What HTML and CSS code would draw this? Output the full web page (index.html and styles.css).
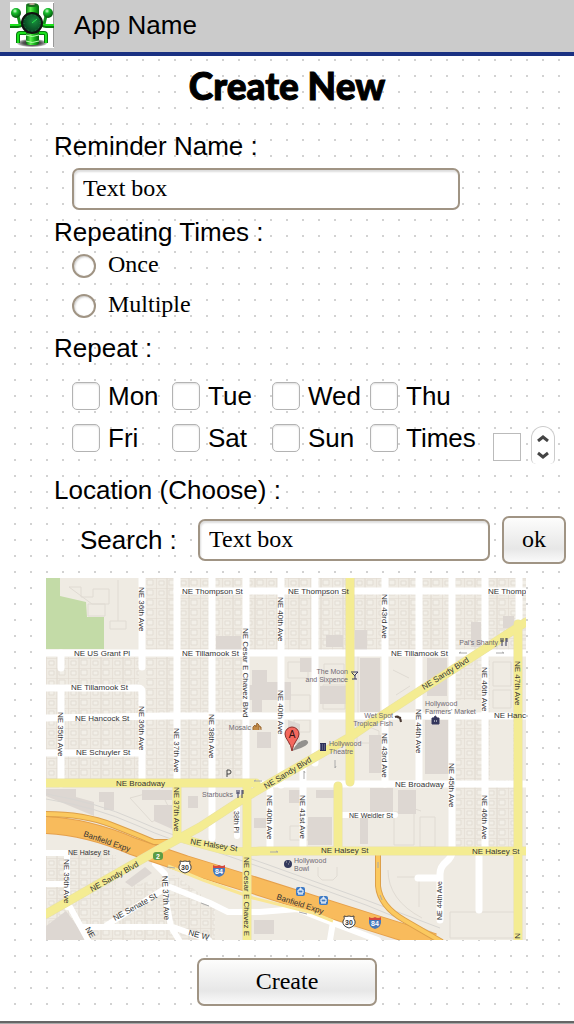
FILE: index.html
```html
<!DOCTYPE html>
<html lang="en">
<head>
<meta charset="utf-8">
<meta name="viewport" content="width=device-width, initial-scale=1">
<title>Create New</title>
<link rel="stylesheet" href="styles.css">
</head>
<body>
<header class="app-bar">
  <svg class="logo" viewBox="0 0 44 46" aria-hidden="true">
    <defs>
      <linearGradient id="tube" x1="0" x2="1" y1="0" y2="0"><stop offset="0" stop-color="#087a10"/><stop offset=".35" stop-color="#5df04e"/><stop offset=".65" stop-color="#18b41c"/><stop offset="1" stop-color="#04640a"/></linearGradient>
      <radialGradient id="ball" cx=".4" cy=".3" r=".7"><stop offset="0" stop-color="#d4ffd0"/><stop offset=".35" stop-color="#18c02c"/><stop offset="1" stop-color="#03520c"/></radialGradient>
      <radialGradient id="dial" cx=".6" cy=".4" r=".7"><stop offset="0" stop-color="#17903c"/><stop offset="1" stop-color="#04301c"/></radialGradient>
      <radialGradient id="ground"><stop offset="0" stop-color="#111"/><stop offset=".6" stop-color="#555"/><stop offset="1" stop-color="#ccc"/></radialGradient>
    </defs>
    <path fill="#fff" d="M0 0h44v46H0z"/>
    <path fill="#999" d="M43 1h1v44h-1z"/>
    <ellipse cx="22" cy="41" rx="15" ry="4" fill="url(#ground)"/>
    <path d="M0 24h8q4 0 6-5l2-5M44 24h-8q-4 0-6-5l-2-5M8 41V33q0-2 2-2h6M36 41V33q0-2-2-2h-6" fill="none" stroke="#067a0c" stroke-width="4"/>
    <path d="M0 23h8q4 0 6-5l2-5M44 23h-8q-4 0-6-5l-2-5M8 41V33q0-2 2-2h6M36 41V33q0-2-2-2h-6" fill="none" stroke="#1be01c" stroke-width="2"/>
    <path d="M8 14l2 8M36 14l-2 8" stroke="#12951a" stroke-width="3"/>
    <rect x="16" y="2" width="13" height="41" rx="3" fill="url(#tube)"/>
    <ellipse cx="22" cy="3" rx="6" ry="2" fill="#1a6c20"/>
    <ellipse cx="22" cy="2" rx="3" ry="1" fill="#c9a99e"/>
    <path d="M16 33q6 3 13 0M16 39q6 3 13 0" fill="none" stroke="#b4ffaf"/>
    <circle cx="6" cy="11" r="5" fill="url(#ball)"/>
    <circle cx="38" cy="11" r="5" fill="url(#ball)"/>
    <circle cx="22" cy="21" r="10" fill="url(#dial)" stroke="#111" stroke-width="2"/>
    <circle cx="22" cy="21" r="8" fill="none" stroke="#2c7a48" stroke-dasharray="1 3"/>
    <path d="M22 21l5-4" stroke="#2ce050"/>
  </svg>
  <span class="app-name">App Name</span>
</header>

<main class="screen">
  <h1 class="title">Create New</h1>
  <form class="form">
    <label class="heading" for="name">Reminder Name :</label>
    <input class="text-box name-box" id="name" type="text" value="Text box">

    <fieldset class="group">
      <legend class="heading">Repeating Times :</legend>
      <div class="radios">
        <label class="radio-row"><input class="radio" type="radio" name="times"><span>Once</span></label>
        <label class="radio-row"><input class="radio" type="radio" name="times"><span>Multiple</span></label>
      </div>
    </fieldset>

    <fieldset class="group repeat">
      <legend class="heading">Repeat :</legend>
      <div class="days">
        <label class="day"><input class="check" type="checkbox">Mon</label>
        <label class="day"><input class="check" type="checkbox">Tue</label>
        <label class="day"><input class="check" type="checkbox">Wed</label>
        <label class="day"><input class="check" type="checkbox">Thu</label>
        <label class="day first"><input class="check" type="checkbox">Fri</label>
        <label class="day"><input class="check" type="checkbox">Sat</label>
        <label class="day"><input class="check" type="checkbox">Sun</label>
        <label class="day"><input class="check" type="checkbox">Times</label>
        <div class="stepper">
          <input class="count" type="text" aria-label="Number of times">
          <div class="arrows">
            <button class="arrow" type="button" aria-label="More"><svg viewBox="0 0 12 8"><path d="M1 7l5-4 5 4"/></svg></button>
            <button class="arrow" type="button" aria-label="Fewer"><svg viewBox="0 0 12 8"><path d="M1 2l5 4 5-4"/></svg></button>
          </div>
        </div>
      </div>
    </fieldset>

    <h2 class="heading location">Location (Choose) :</h2>
    <div class="search">
      <label class="search-label" for="search">Search :</label>
      <input class="text-box search-box" id="search" type="text" value="Text box">
      <button class="button ok" type="button">ok</button>
    </div>

    <svg class="map" viewBox="46 578 480 362" role="img" aria-label="Street map of the Hollywood district">
      <defs>
        <pattern id="lots" x="46" y="578" width="22" height="10" patternUnits="userSpaceOnUse">
          <path d="M0 0H22M0 0V10M11 0V10" stroke="#dfd8ce" fill="none"/>
          <path d="M3 3h5v4H3zM13 2h6v5h-6z" fill="#f2efe8" stroke="#e3ddd4"/>
        </pattern>
        <g id="us30"><path d="M-5-6q2 1 5 0q3 1 5 0q-1 3 1 5q1 5-6 7q-7-2-6-7q2-2 1-5z" fill="#fff" stroke="#444"/><text class="shield" y="3">30</text></g>
        <g id="i84"><path d="M-6-3h12q1 7-6 9q-7-2-6-9z" fill="#4879bb"/><path d="M-6-6q3 2 6 0q3 2 6 0v3H-6z" fill="#d5483e"/><text class="shield light" y="3">84</text></g>
        <g id="fork" fill="none" stroke="#34365c"><path d="M-3-4v4M-1-4v4M-3-1h2M-2 0v4" /><path d="M2-4v8M3-4v4" /></g>
        <g id="transit"><rect x="-4" y="-4" width="9" height="9" rx="2" fill="#3e7ac4"/><path d="M-2 2V-1h5v3zM0-1v-2h1v2M-2 3h5" fill="none" stroke="#fff"/></g>
      </defs>

      <path fill="#efebe3" d="M46 578h480v362H46z"/>
      <path fill="url(#lots)" d="M146 578h380v75H146zM46 657h93v127H46zM146 657h100v127H146zM285 578h62v75h-62zM355 578h171v75H355zM456 660h60v190h-60zM388 578h62v75h-62zM46 855h70v85H46zM115 890l60-15 40 30v35H115z"/>

      <g fill="#efebe3">
        <path d="M60 578h79v71H60zM250 657h28v56h-28zM285 657h62v126h-62zM355 657h60v58h-60zM355 720h28v60h-28zM455 700h28v12h-28zM490 657h24v55h-24zM388 788h60v58h-60zM490 720h23v60h-23z"/>
      </g>
      <g fill="none" stroke="#e0dbd3">
        <path d="M69 587h12v10h12v-8h16v15H92zM88 604h17v12H88zM110 621h16v8h-16zM118 580v41M288 662h20v16h-20zM294 720h16v12h-16zM324 664h20v18h-20zM393 670l16 8M396 695l14-9M290 826h18v14h-18zM358 655v58M394 812h20v33h-20zM420 817h15v30h-15zM318 867v9l4 4h11l4-4v-9M405 794l10 3-6 10 12 4M388 870q0 30 34 48M397 877h22v30"/>
        <path d="M290 695h20v16h-20zM323 685h22v24h-22zM493 662h18v24h-18zM493 690h18v18h-18zM130 798l30-8 10 20-18 12zM450 912h65v26h-65zM357 722l22 9v12h-22z"/>
      </g>
      <g fill="#ddd7d2">
        <path d="M216 636h25v14h-25zM252 670h15v12h24v18h-42v-15h3zM252 700h10v12h-10zM300 658h12v14h-12zM320 686h26v18h-26zM326 635h17v12h-17zM355 630h12v20h-12zM360 658h20v54h-20zM427 658h20v38h-20zM425 720h23v40h-23zM425 760h23v14h-23zM471 622h10v25h-10zM503 616h11v12h-11zM369 735h13v38h-13zM360 812h8v32h-8zM370 788h23v24h-23zM398 790h18v24h-18zM308 817h24v28h-24zM289 790h11v13h-11zM288 720l12 4v20h-12zM257 732h14v16h-14zM316 790h18v8h-18z"/>
        <path d="M46 789h30v8l18 5v14l-48-20zM99 792h15v18h-10v-8h-5zM142 790h30v10h-30zM154 805h18v24l-18-8zM254 818h12v10h-12zM46 926l20-15 18 24v5H46zM125 882l20-15 7 6-20 14zM254 920h20v14h-20zM188 796h10v12h-10z"/>
      </g>
      <path fill="#c3dba7" d="M46 578h14v18l26 6 1 15h17v32H46z"/>

      <g class="rail"><path d="M46 794q50 8 90 26t60 20l70 24 100 36 74 28"/><path d="M46 799q50 8 90 26t60 20l70 24 100 36 66 27"/></g>

      <g class="road">
        <path d="M142 578v89M142 784V692q0-4-4-4H46M177 578v206M212 578v260M246 578v206M281 578v207M315 578v185M385 578v206M419 578v206M452 578v274q0 5-6 10t-6 12v46M440 878h-22M485 578v272M479 850v60M519 578v50M61 653v15M61 690v94"/>
        <path d="M177 591h349M46 653h480M46 718l120-2h360M46 753h96M250 784h276M270 790v58M303 765v84"/>
        <path class="lane" d="M237 808v28M338 815h57M46 853h20M67 853v54M46 884h20M70 907l18 33"/>
        <path class="lane" d="M155 864l10 10 2 32 4 21 8 13M83 927h90l36 13M107 925l57-36M170 887l40 16 18 9h32l37-3 36 14 45 17M333 922l-3 18"/>
      </g>

      <g class="freeway">
        <path class="edge" d="M46 825q42 2 86 21l53 18 65 20 120 38 64 20"/>
        <path d="M46 825q42 2 86 21l53 18 65 20 120 38 64 20"/>
        <path class="ramp-edge" d="M46 814q38 0 66 11t42 17h20M378 852v34q2 20 26 34l38 22"/>
        <path class="ramp" d="M46 814q38 0 66 11t42 17h20M378 852v34q2 20 26 34l38 22"/>
        <path class="pale" d="M168 866l35 14 50 18 60 15 20 8"/>
      </g>

      <g class="main-road edge">
        <path d="M46 783h210M350 578v204M338 786v64M177 787v50M247 784v156M518 624v316M184 839q20 6 36 10t40 2h266M46 914l112-64 42-23 46-30 104-60 22-15 154-100"/>
      </g>
      <g class="main-road">
        <path d="M46 783h210M350 578v204M338 786v64M177 787v50M247 784v156M518 624v316M184 839q20 6 36 10t40 2h266M46 914l112-64 42-23 46-30 104-60 22-15 154-100"/>
      </g>
      <g class="direction"><path d="M254 781h8m-8 0l2-1M270 852h8m0 0l-2-1M459 653h8m-8 0l2-1M496 653h8m0 0l-2-1M304 779v-8m0 0l1 2M335 760v8m0 0l1-2M378 868v-6M382 900l-2-5M201 903l8 3M167 867l8 1M299 912l8 2"/></g>

      <g class="street">
        <text x="74" y="656">NE US Grant Pl</text>
        <text x="71" y="690">NE Tillamook St</text>
        <text x="75" y="721">NE Hancock St</text>
        <text x="76" y="755">NE Schuyler St</text>
        <text x="182" y="594">NE Thompson St</text>
        <text x="288" y="594">NE Thompson St</text>
        <text x="488" y="594">NE Thomp</text>
        <text x="182" y="656">NE Tillamook St</text>
        <text x="391" y="656">NE Tillamook St</text>
        <text x="494" y="718">NE Hanc</text>
        <text x="116" y="786">NE Broadway</text>
        <text x="395" y="787">NE Broadway</text>
        <text x="321" y="853">NE Halsey St</text>
        <text x="472" y="854">NE Halsey St</text>
        <text class="small" x="68" y="855">NE Halsey St</text>
        <text class="small" x="349" y="818">NE Weidler St</text>
        <text transform="translate(190 844) rotate(9)">NE Halsey St</text>
        <text transform="translate(115 921) rotate(-29)">NE Senate St</text>
        <text transform="translate(188 935) rotate(14)">NE W</text>
        <text transform="translate(85 929) rotate(60)">NE</text>
        <text transform="translate(424 690) rotate(-32)">NE Sandy Blvd</text>
        <text transform="translate(266 789) rotate(-31)">NE Sandy Blvd</text>
        <text transform="translate(92 892) rotate(-29)">NE Sandy Blvd</text>
        <text transform="translate(83 836) rotate(19)">Banfield Expy</text>
        <text transform="translate(276 899) rotate(18)">Banfield Expy</text>
        <text transform="translate(139 587) rotate(90)">NE 36th Ave</text>
        <text transform="translate(139 706) rotate(90)">NE 36th Ave</text>
        <text transform="translate(58 712) rotate(90)">NE 35th Ave</text>
        <text transform="translate(174 728) rotate(90)">NE 37th Ave</text>
        <text transform="translate(174 787) rotate(90)">NE 37th Ave</text>
        <text transform="translate(64 859) rotate(90)">NE 35th Ave</text>
        <text transform="translate(162 876) rotate(87)">NE 37th Ave</text>
        <text transform="translate(209 714) rotate(90)">NE 38th Ave</text>
        <text transform="translate(243 628) rotate(90)">NE Cesar E Chavez Blvd</text>
        <text transform="translate(278 597) rotate(90)">NE 40th Ave</text>
        <text transform="translate(278 690) rotate(90)">NE 40th Ave</text>
        <text class="small" transform="translate(234 811) rotate(90)">38th Pl</text>
        <text transform="translate(267 795) rotate(90)">NE 40th Ave</text>
        <text transform="translate(300 795) rotate(90)">NE 41st Ave</text>
        <text transform="translate(244 857) rotate(90)">NE Cesar E Chavez E</text>
        <text transform="translate(382 594) rotate(90)">NE 43rd Ave</text>
        <text transform="translate(382 733) rotate(90)">NE 43rd Ave</text>
        <text transform="translate(482 667) rotate(90)">NE 46th Ave</text>
        <text transform="translate(416 709) rotate(90)">NE 44th Ave</text>
        <text transform="translate(515 661) rotate(90)">NE 47th Ave</text>
        <text transform="translate(449 763) rotate(90)">NE 45th Ave</text>
        <text transform="translate(482 795) rotate(90)">NE 46th Ave</text>
        <text transform="translate(515 933) rotate(90)">N</text>
        <text class="small" transform="translate(442 920) rotate(-90)">NE 44th Ave</text>
      </g>

      <g class="place">
        <text class="end" x="348" y="674">The Moon</text>
        <text class="end" x="348" y="682">and Sixpence</text>
        <text class="end" x="251" y="730">Mosaic</text>
        <text x="329" y="746">Hollywood</text>
        <text x="329" y="754">Theatre</text>
        <text class="end" x="393" y="718">Wet Spot</text>
        <text class="end" x="393" y="726">Tropical Fish</text>
        <text class="end" x="498" y="645">Pal's Shanty</text>
        <text x="425" y="706">Hollywood</text>
        <text x="425" y="714">Farmers' Market</text>
        <text x="202" y="797">Starbucks</text>
        <text x="294" y="863">Hollywood</text>
        <text x="294" y="871">Bowl</text>
      </g>

      <path d="M351 672h7l-3 3v4M352 679h5M352 673l3 3" fill="none" stroke="#34365c"/>
      <use href="#fork" x="504" y="642"/>
      <use href="#fork" x="240" y="794"/>
      <path d="M253 730v-3l2-2 1 2 1-4 2 2v5M259 726l2 1v3" fill="#c28a45" stroke="#9c6a35"/>
      <path d="M320 743h6v8h-6z" fill="#2f315a"/><path d="M320 745h6M320 747h6M320 749h6" stroke="#8b8ca8" stroke-dasharray="1 1"/>
      <path d="M395 717q5-2 6 5M397 717l4 1" fill="none" stroke="#4b3b35" stroke-width="2"/>
      <path d="M432 718h7v6h-7zM434 718q1-4 3 0" fill="#34365c" stroke="#34365c"/><path d="M434 721h1m1 0h1" stroke="#fff"/>
      <path d="M227 777v-7h2q2 0 2 2t-2 2h-2" fill="none" stroke="#444"/>
      <circle cx="288" cy="864" r="4" fill="#33395c"/><path d="M286 862h1m2 0h1m-2 2h1" stroke="#aaa"/>
      <use href="#transit" x="300" y="891"/>
      <use href="#transit" x="323" y="900"/>
      <use href="#us30" x="185" y="867"/>
      <use href="#us30" x="349" y="922"/>
      <use href="#i84" x="219" y="871"/>
      <use href="#i84" x="375" y="923"/>
      <rect x="153" y="852" width="10" height="8" rx="3" fill="#5a9c45"/><text class="shield light" x="158" y="859">2</text>
      <path d="M292 751q7-12 14-11q6 3-5 8z" fill="#555" opacity=".6"/>
      <path d="M292 751q-1-6-4-10t-3-7a7 7 0 0 1 14 0q0 3-3 7t-4 10z" fill="#f4685e" stroke="#8c302c"/>
      <text class="pin" x="292" y="738">A</text>
    </svg>

    <button class="button create" type="submit">Create</button>
  </form>
</main>
<footer class="bottom-edge"></footer>
</body>
</html>
```
FILE: styles.css
```css
* { box-sizing: border-box; }

body {
  margin: 0;
  background: #fff;
  color: #000;
  font-family: "Liberation Sans", Arial, sans-serif;
  font-size: 26px;
  line-height: 30px;
}

.app-bar {
  display: flex;
  align-items: center;
  gap: 20px;
  height: 56px;
  padding: 0 10px 2px;
  background: #cbcbcb;
  border-bottom: 4px solid #1a3182;
}

.logo { width: 44px; height: 46px; flex: none; }

.screen {
  padding: 8px 0 10px;
  background-image: conic-gradient(from 270deg at 2px 2px, #d2d2d2 90deg, transparent 0);
  background-size: 16px 16px;
  background-position: 14px 3px;
}

.title {
  margin: 0 0 23px;
  font-family: Lato, "Gill Sans", sans-serif;
  font-size: 37px;
  font-weight: 900;
  line-height: 44px;
  text-align: center;
  -webkit-text-stroke: 1px #000;
}

.form { display: flex; flex-direction: column; }

.heading {
  display: block;
  margin: 0 0 0 54px;
  padding: 0;
  font-size: 26px;
  font-weight: 400;
}

.text-box {
  min-width: 0;
  height: 42px;
  padding: 0 9px 2px;
  border: 2px solid #a09484;
  border-radius: 7px;
  background: #fff;
  box-shadow: inset 1px 2px 2px #ddd;
  color: #000;
  font: 24px "Liberation Serif", "Times New Roman", serif;
}

.name-box { margin: 7px 114px 7px 72px; }

.group { min-width: 0; margin: 0; padding: 0; border: 0; }

.radios {
  display: flex;
  flex-direction: column;
  gap: 16px;
  padding: 7px 0 15px 72px;
}

.radio-row {
  display: flex;
  align-items: center;
  gap: 12px;
  height: 24px;
  font: 24px "Liberation Serif", "Times New Roman", serif;
}

.radio-row span { padding-bottom: 4px; }

.radio {
  appearance: none;
  width: 24px;
  height: 24px;
  margin: 0;
  border: 2px solid #a09484;
  border-radius: 50%;
  background: #fff;
  box-shadow: inset 1px 1px 2px #ccc;
}

.radio:checked { background: radial-gradient(#555 30%, #fff 40%); }

.days {
  display: grid;
  grid-template-columns: 100px 100px 98px 123px 1fr;
  row-gap: 14px;
  align-items: start;
  padding: 19px 0 11px 72px;
}

.day { display: flex; align-items: center; gap: 8px; height: 28px; }
.first { grid-column: 1; }

.check {
  appearance: none;
  flex: none;
  width: 28px;
  height: 28px;
  margin: 0;
  border: 1px solid #b3b3b3;
  border-radius: 5px;
  background: #fff;
  box-shadow: inset 0 1px 2px #ddd;
}

.check:checked { background: #777; }

.stepper { display: flex; gap: 10px; height: 40px; padding-top: 2px; }

.count {
  width: 28px;
  height: 28px;
  margin: 7px 0 0;
  padding: 0 4px;
  border: 1px solid #bbb;
  background: #fff;
  font-size: 18px;
}

.arrows {
  display: flex;
  flex-direction: column;
  width: 24px;
  height: 38px;
  padding-top: 2px;
  border: 1px solid #ccc;
  border-bottom: 0;
  border-radius: 12px 12px 5px 5px;
  background: #fff;
}

.arrow {
  flex: 1;
  padding: 0;
  border: 0;
  background: none;
  line-height: 0;
}

.arrow svg { width: 12px; height: 8px; }
.arrow path { fill: none; stroke: #444; stroke-width: 3; }

.search {
  display: flex;
  align-items: center;
  margin: 11px 8px 14px 80px;
}

.search-label { width: 118px; flex: none; }
.search-box { flex: 1; margin-right: 12px; }

.button {
  height: 48px;
  padding: 0 0 2px;
  border: 2px solid #a09484;
  border-radius: 7px;
  background: linear-gradient(#fdfdfc, #e7e7e7 70%, #fafafa);
  color: #000;
  font: 24px "Liberation Serif", "Times New Roman", serif;
}

.ok { width: 64px; flex: none; }
.create { width: 180px; margin: 18px 0 0; align-self: center; }

.map {
  display: block;
  width: auto;
  margin: 0 48px 0 46px;
}

.road { fill: none; stroke: #fff; stroke-width: 7; stroke-linecap: round; stroke-linejoin: round; }
.lane { stroke-width: 6; }
.rail { fill: none; stroke: #d8d6d2; }
.freeway { fill: none; stroke: #f8bb5c; stroke-width: 16; }
.freeway .edge { stroke: #e5a04c; stroke-width: 18; }
.freeway .ramp-edge { stroke: #dda04a; stroke-width: 6; }
.freeway .ramp { stroke: #fbc95f; stroke-width: 4; }
.freeway .pale { stroke: #f9e694; stroke-width: 3; }
.main-road { fill: none; stroke: #f4ec92; stroke-width: 8; stroke-linecap: round; stroke-linejoin: round; }
.main-road.edge { stroke: #e9e2a4; stroke-width: 9; }
.direction { fill: none; stroke: #aaa; }

.street { fill: #333; font-size: 8px; }
.small { font-size: 7px; }
.place { fill: #6f6a74; font-size: 7px; }
.end { text-anchor: end; }
.shield { fill: #333; font-size: 7px; font-weight: 700; text-anchor: middle; }
.light { fill: #fff; }
.pin { fill: #311; font-size: 10px; text-anchor: middle; }

.bottom-edge {
  height: 3px;
  margin-top: 5px;
  background: #aaa;
  border-top: 2px solid #666;
}
```
